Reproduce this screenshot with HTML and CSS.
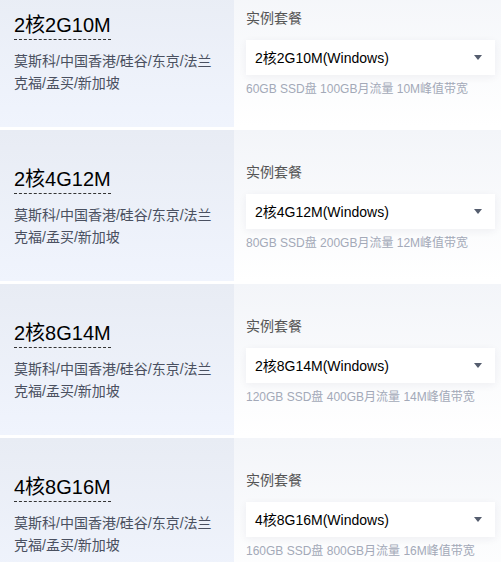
FILE: index.html
```html
<!DOCTYPE html>
<html lang="zh-CN">
<head>
    <meta charset="UTF-8">
    <meta name="viewport" content="width=device-width, initial-scale=1.0">
    <title>实例套餐</title>
    <link rel="stylesheet" href="styles.css">
</head>
<body>
    <div class="plan-list">
        <div class="plan-card">
            <div class="plan-info">
                <h3 class="plan-name"><span>2核2G10M</span></h3>
                <p class="plan-regions">莫斯科/中国香港/硅谷/东京/法兰克福/孟买/新加坡</p>
            </div>
            <div class="plan-select">
                <div class="select-label">实例套餐</div>
                <div class="select-box">
                    <span>2核2G10M(Windows)</span>
                    <i class="caret"></i>
                </div>
                <div class="select-desc">60GB SSD盘 100GB月流量 10M峰值带宽</div>
            </div>
        </div>

        <div class="plan-card">
            <div class="plan-info">
                <h3 class="plan-name"><span>2核4G12M</span></h3>
                <p class="plan-regions">莫斯科/中国香港/硅谷/东京/法兰克福/孟买/新加坡</p>
            </div>
            <div class="plan-select">
                <div class="select-label">实例套餐</div>
                <div class="select-box">
                    <span>2核4G12M(Windows)</span>
                    <i class="caret"></i>
                </div>
                <div class="select-desc">80GB SSD盘 200GB月流量 12M峰值带宽</div>
            </div>
        </div>

        <div class="plan-card">
            <div class="plan-info">
                <h3 class="plan-name"><span>2核8G14M</span></h3>
                <p class="plan-regions">莫斯科/中国香港/硅谷/东京/法兰克福/孟买/新加坡</p>
            </div>
            <div class="plan-select">
                <div class="select-label">实例套餐</div>
                <div class="select-box">
                    <span>2核8G14M(Windows)</span>
                    <i class="caret"></i>
                </div>
                <div class="select-desc">120GB SSD盘 400GB月流量 14M峰值带宽</div>
            </div>
        </div>

        <div class="plan-card">
            <div class="plan-info">
                <h3 class="plan-name"><span>4核8G16M</span></h3>
                <p class="plan-regions">莫斯科/中国香港/硅谷/东京/法兰克福/孟买/新加坡</p>
            </div>
            <div class="plan-select">
                <div class="select-label">实例套餐</div>
                <div class="select-box">
                    <span>4核8G16M(Windows)</span>
                    <i class="caret"></i>
                </div>
                <div class="select-desc">160GB SSD盘 800GB月流量 16M峰值带宽</div>
            </div>
        </div>
    </div>
</body>
</html>
```

FILE: styles.css
```css
* {
    margin: 0;
    padding: 0;
    box-sizing: border-box;
}

body {
    font-family: 'Liberation Sans', 'Noto Sans CJK SC', sans-serif;
    background: #fff;
    overflow: hidden;
}

/* page is scrolled a little, first card is cut off at the top */
.plan-list {
    margin-top: -24px;
    display: flex;
    flex-direction: column;
    gap: 3px;
}

.plan-card {
    display: flex;
    height: 151px;
}

.plan-info {
    width: 234px;
    flex-shrink: 0;
    padding: 2px 14px 0;
    display: flex;
    flex-direction: column;
    justify-content: center;
    background: linear-gradient(180deg, #e8ecf4 0%, #f0f4fd 100%);
}

.plan-name {
    font-size: 20px;
    font-weight: 400;
    color: #000;
    line-height: 28px;
}

.plan-name span {
    display: inline-block;
    border-bottom: 1px dashed #333;
}

.plan-regions {
    margin-top: 10px;
    font-size: 14px;
    line-height: 22px;
    color: #4a5060;
}

.plan-select {
    flex: 1;
    padding: 2px 12px 0;
    display: flex;
    flex-direction: column;
    justify-content: center;
    background: linear-gradient(180deg, #f3f5f9 0%, #ffffff 100%);
}

.select-label {
    font-size: 14px;
    line-height: 20px;
    color: #555;
}

.select-box {
    margin-top: 12px;
    width: 249px;
    height: 35px;
    padding: 0 13px 0 9px;
    display: flex;
    align-items: center;
    justify-content: space-between;
    background: #fff;
    box-shadow: 0 2px 8px rgba(30, 40, 70, 0.06);
    font-size: 14px;
    color: #000;
}

.caret {
    width: 0;
    height: 0;
    border-left: 4px solid transparent;
    border-right: 4px solid transparent;
    border-top: 5px solid #555d6e;
}

.select-desc {
    margin-top: 5px;
    font-size: 12px;
    line-height: 18px;
    color: #a3a9b8;
}
```
